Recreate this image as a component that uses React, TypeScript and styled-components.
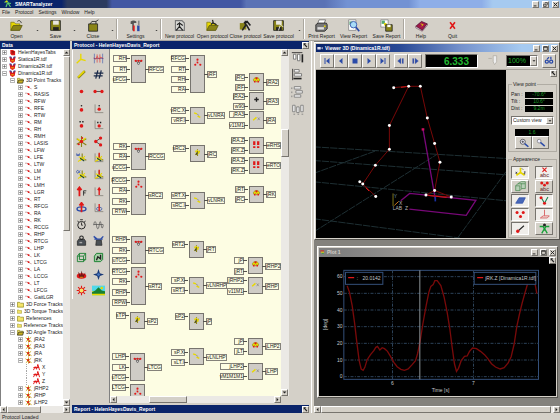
import React from "react";
import styled, { createGlobalStyle, css } from "styled-components";

const face = "#d4d0c8";
const navy = "#0a246a";
const raised = css`
  border: 1px solid;
  border-color: #fff #77746e #77746e #fff;
`;
const sunken = css`
  border: 1px solid;
  border-color: #77746e #fff #fff #77746e;
`;

const Global = createGlobalStyle`
  * { box-sizing: border-box; }
  body { margin: 0; background: ${face}; color: #222; font: 5px/7px "Liberation Sans", Arial, sans-serif; }
  button, select, input { font: inherit; color: inherit; padding: 0; margin: 0; }
  ul { list-style: none; margin: 0; padding: 0; }
  svg { display: block; }
`;

const Shell = styled.div`
  min-height: 100vh;
  display: grid;
  grid-template-rows: 8px 9px 24px 1fr 8px;
  overflow: hidden;
`;
const TitleBar = styled.header`
  display: flex;
  align-items: center;
  gap: 3px;
  padding: 0 1px 0 4px;
  color: #fff;
  font-weight: 700;
  background: linear-gradient(90deg, ${navy} 11%, #2c3b5e 12% 19%, #4257a3 20% 43%, #5a72b5 44% 58%, #7392d3 62% 73%, #8eaee8 75% 86%, #a6caf0 88%);
`;
const Spacer = styled.span`
  flex: 1;
`;
const MenuBar = styled.nav`
  display: flex;
  align-items: center;
  gap: 5px;
  padding-left: 2px;
`;
const MenuButton = styled.button`
  border: 0;
  background: none;
`;
const Toolbar = styled.div`
  display: flex;
  align-items: stretch;
  border-top: 1px solid #fff;
  border-bottom: 1px solid #aaa69e;
`;
const ToolButton = styled.button<{ $w: number }>`
  width: ${(p) => p.$w}px;
  border: 0;
  background: none;
  display: flex;
  flex-direction: column;
  align-items: center;
  justify-content: flex-end;
  gap: 1px;
  white-space: nowrap;
  line-height: 6px;
  padding-bottom: 1px;
`;
const DropButton = styled.button`
  width: 8px;
  border: 0;
  background: none;
  display: flex;
  align-items: center;
  justify-content: center;
  padding-top: 2px;
`;
const Separator = styled.span`
  width: 2px;
  margin: 1px 1px 1px 0;
  border-left: 1px solid #aaa69e;
  border-right: 1px solid #fff;
`;
const Main = styled.main`
  display: grid;
  grid-template-columns: 71px minmax(0, 241fr) minmax(0, 248fr);
  min-height: 0;
`;
const PanelTitle = styled.h2`
  margin: 0;
  height: 8px;
  padding-left: 2px;
  display: flex;
  align-items: center;
  justify-content: space-between;
  background: ${navy};
  color: #fff;
  font-size: 5px;
  line-height: 8px;
  white-space: nowrap;
`;
const DataPanel = styled.section`
  display: grid;
  grid-template-rows: 8px 1fr 7px;
  padding-right: 1px;
`;
const TreeArea = styled.div`
  display: grid;
  grid-template-columns: minmax(0, 1fr) 7px;
  background: #fff;
  border-left: 1px solid #808080;
`;
const Tree = styled.ul`
  overflow: hidden;
`;
const TreeRow = styled.li<{ $level: number }>`
  height: 7px;
  display: flex;
  align-items: center;
  gap: 2px;
  padding-left: ${(p) => 1 + p.$level * 8}px;
  white-space: nowrap;
`;
const Expander = styled.button`
  width: 5px;
  height: 5px;
  flex: none;
  border: 1px solid #b8b8b8;
  background: #fff;
  display: grid;
  place-items: center;
`;
const NoExpander = styled.span`
  width: 5px;
  height: 7px;
  flex: none;
  border-left: 1px dotted #a8a8a8;
`;

const Track = styled.div<{ $vertical?: boolean }>`
  display: flex;
  flex-direction: ${(p) => (p.$vertical ? "column" : "row")};
  background: #ebe9e5;
  min-width: 0;
`;
const Thumb = styled.div<{ $size: number }>`
  ${raised}
  background: ${face};
  flex: ${(p) => p.$size} 1 0;
`;
const Rest = styled.div<{ $part: number }>`
  flex: ${(p) => p.$part} 1 0;
`;
const SmallButton = styled.button`
  ${raised}
  width: 7px;
  height: 7px;
  flex: none;
  background: ${face};
  display: grid;
  place-items: center;
`;

const ProtocolColumn = styled.section`
  display: grid;
  grid-template-rows: 8px 1fr 8px;
  padding: 0 2px 0 1px;
  border-right: 1px solid #fff;
`;
const ProtocolBody = styled.div`
  display: grid;
  grid-template-columns: 37px minmax(0, 1fr) 20px;
  padding-bottom: 2px;
`;
const Palette = styled.div`
  display: grid;
  grid-template-columns: 17px 17px;
  grid-template-rows: repeat(15, 1fr);
  height: 249px;
  margin-top: 1px;
  border-left: 1px solid #fff;
`;
const PaletteButton = styled.button`
  border: 0;
  background: none;
  display: grid;
  place-items: center;
`;
const AlignTools = styled.div`
  display: flex;
  flex-direction: column;
  gap: 4px;
  align-items: center;
  padding: 2px 3px 0 0;
`;
const CanvasArea = styled.div`
  display: grid;
  grid-template-columns: minmax(0, 1fr) 8px;
  grid-template-rows: 1fr 7px;
  border-left: 1px solid #808080;
`;
const Canvas = styled.div`
  position: relative;
  overflow: hidden;
  background: #fdfde3;
`;
const Block = styled.div<{ $x: number; $y: number; $h: number }>`
  position: absolute;
  left: ${(p) => p.$x}px;
  top: ${(p) => p.$y}px;
  width: 15px;
  height: ${(p) => p.$h}px;
  border: 1px solid #77746e;
  background: #cfccc6;
  display: flex;
  justify-content: center;
  padding-top: 2px;
`;
const Tag = styled.span<{ $x: number; $y: number; $w?: number; $out?: boolean }>`
  position: absolute;
  left: ${(p) => p.$x}px;
  top: ${(p) => p.$y}px;
  ${(p) => p.$w && `width: ${p.$w}px;`}
  height: 7px;
  display: flex;
  justify-content: flex-end;
  border: 1px solid #85827a;
  line-height: 5px;
  white-space: nowrap;
  &::after {
    content: "";
    position: absolute;
    top: 2px;
    width: 4px;
    border-top: 1px solid #55534e;
    ${(p) => (p.$out ? "right: 100%;" : "left: 100%;")}
  }
`;

const Desk = styled.section`
  display: flex;
  flex-direction: column;
  background: #84827d;
  border-left: 2px solid ${face};
`;
const Win = styled.section`
  border: 1px solid #fff;
  border-right-color: #55534e;
  border-bottom-color: #55534e;
  background: ${face};
  padding: 1px;
`;
const ViewerWin = styled(Win)`
  margin-top: 1px;
`;
const PlotWin = styled(Win)`
  margin: 6px 2px 5px 3px;
`;
const WinTitle = styled.h2<{ $idle?: boolean }>`
  margin: 0;
  height: ${(p) => (p.$idle ? 9 : 8)}px;
  display: flex;
  align-items: center;
  gap: 2px;
  padding-left: 1px;
  color: ${(p) => (p.$idle ? face : "#fff")};
  font-size: 5px;
  background: ${(p) =>
    p.$idle
      ? "linear-gradient(90deg, #808080 10%, #a09c98 50%, #bdbab4)"
      : `linear-gradient(90deg, ${navy}, #2a4a96 35%, #7592cc 60%, #a6caf0 85%)`};
`;
const PlayBar = styled.div`
  display: flex;
  align-items: center;
  height: 18px;
  padding: 0 2px 0 4px;
  border-bottom: 1px solid #aaa69e;
`;
const PlayButton = styled.button`
  ${raised}
  width: 14px;
  height: 14px;
  background: ${face};
  display: grid;
  place-items: center;
`;
const Gap = styled.span`
  width: 4px;
`;
const Clock = styled.output`
  ${sunken}
  width: 53px;
  height: 14px;
  margin-left: 3px;
  padding-right: 8px;
  background: #000;
  color: #22b830;
  font: 700 10px/13px "Liberation Sans", Arial, sans-serif;
  text-align: right;
`;
const SelectBox = styled.span<{ $dark?: boolean }>`
  ${sunken}
  position: relative;
  display: block;
  width: ${(p) => (p.$dark ? 32 : 43)}px;
  height: ${(p) => (p.$dark ? 12 : 9)}px;
  background: ${(p) => (p.$dark ? "#000" : "#fff")};
  color: ${(p) => (p.$dark ? "#1fb02b" : "#222")};
  font-size: ${(p) => (p.$dark ? 7 : 5)}px;
`;
const ViewSelect = styled(SelectBox)`
  margin-top: 4px;
`;
const Select = styled.select`
  appearance: none;
  border: 0;
  background: transparent;
  width: 100%;
  height: 100%;
  padding-left: 1px;
  display: block;
`;
const SelectArrow = styled.span`
  ${raised}
  position: absolute;
  right: 0;
  top: 0;
  bottom: 0;
  width: 7px;
  background: ${face};
  display: grid;
  place-items: center;
  pointer-events: none;
`;
const ViewerBody = styled.div`
  display: grid;
  grid-template-columns: minmax(0, 1fr) 52px;
`;
const Scene = styled.svg`
  width: 100%;
  height: 168px;
  background: #000;
`;
const Side = styled.aside`
  padding: 0 1px 0 2px;
  display: flex;
  flex-direction: column;
  justify-content: space-between;
`;
const CornerButton = styled(SmallButton)`
  align-self: flex-end;
`;
const Group = styled.fieldset`
  margin: 0;
  padding: 3px 3px 2px 2px;
  min-width: 0;
  border: 1px solid #b0aca4;
`;
const Legend = styled.legend`
  padding: 0 1px;
  margin-left: 1px;
  line-height: 7px;
`;
const Field = styled.label`
  display: flex;
  justify-content: space-between;
  align-items: center;
  height: 7px;
`;
const Reading = styled.input`
  width: 28px;
  height: 6px;
  border: 0;
  background: #000;
  && { color: #1b9c27; }
  text-align: center;
`;
const ZoomBox = styled.div`
  display: grid;
  grid-template-columns: 17px 17px;
  justify-content: center;
  margin-top: 4px;
`;
const ZoomReading = styled(Reading)`
  grid-column: span 2;
  width: 34px;
  height: 7px;
`;
const ToggleGrid = styled.div`
  display: grid;
  grid-template-columns: 18px 18px;
  justify-content: space-between;
  gap: 1px;
`;
const ToggleButton = styled.button<{ $on?: boolean }>`
  ${(p) => (p.$on ? sunken : raised)}
  height: 13px;
  background: ${(p) => (p.$on ? "#f0eeea" : face)};
  display: grid;
  place-items: center;
`;
const PlotArea = styled.div`
  position: relative;
  background: #000;
`;
const PlotSvg = styled.svg`
  width: 100%;
  height: 139px;
`;
const PlotCorner = styled(SmallButton)`
  position: absolute;
  right: 0;
  top: 0;
`;
const Status = styled.footer`
  padding-left: 2px;
  line-height: 8px;
`;

/* ---------- icons ---------- */
const Y = "#e8d800";
const O = "#8a8418";
const R = "#e01818";
const B = "#2a4aa8";
const K = "#222";

const frame = <path d="M3 2v12h12" stroke="#77746e" fill="none" />;
const axes = (
  <g fill="none" strokeWidth="1.6">
    <path d="M9 2v7l6 3" stroke={O} />
    <path d="M9 9L3 14M4 7l9 4M6 13l7-7" stroke={Y} />
    <path d="M6 9l6 4" stroke="#244a30" />
  </g>
);
const folder = (
  <>
    <path d="M1 14V4h4l2 2h5v3" fill={Y} stroke={O} />
    <path d="M1 14l3-6h11l-3 6z" fill={O} stroke="#5c5810" />
  </>
);
const disk = (
  <>
    <path d="M2 2h12v12H2z" fill={O} stroke={K} />
    <path d="M5 2h7v5H5z" fill="#e8e6e0" />
    <path d="M5 10h7v4H5z" fill={K} />
  </>
);
const walker = (
  <g fill="none" stroke={K} strokeWidth="1.4">
    <path d="M3 2h8l3 3v9H3z" fill="#d8d8d4" stroke="#777" />
    <path d="M8 4v5l-4 5M8 9l4 5M5 7l3-2 4 3" />
  </g>
);

const art: Record<string, React.ReactNode> = {
  open: <>{folder}<path d="M9 3c2-2 4-1 5 2" fill="none" stroke={K} /></>,
  save: disk,
  close: <><path d="M2 6h11v9H2z" fill={O} stroke={K} /><path d="M4 6l2-3h5v3M11 3l3-2" fill="none" stroke={K} /></>,
  settings: <><path d="M2 3c3-2 5-1 7 0v2H6v9H4V6H2z" fill="#555" /><path d="M10 8h3v7h-3z" fill={B} /><path d="M5 8h2v7H5z" fill={R} /><path d="M11 2h2v6h-2z" fill="#888" /></>,
  newp: walker,
  openp: <>{folder}<path d="M8 1l1 4 4 2M9 4L6 7" stroke={K} strokeWidth="1.5" fill="none" /></>,
  closep: <><path d="M1 5h8v8H1z" fill={O} /><path d="M8 2v6l-4 6M9 7l4 7M6 5l4-2 4 5" stroke={K} fill="none" strokeWidth="2" /></>,
  savep: <>{disk}<path d="M10 6l4 4M10 8l-2 6" stroke="#fff" /></>,
  print: <><path d="M5 1h8l-2 5H3z" fill="#fff" stroke="#666" /><path d="M1 7l3-2h10l1 2v5l-3 3H1z" fill="#777" stroke={K} /><path d="M3 10h8v3H3z" fill="#ddd" /><path d="M11 8h2v2h-2z" fill={Y} /></>,
  view: <><path d="M2 1h9v13H2z" fill="#fff" stroke="#888" /><path d="M3 3h4v4H3z" fill="#58a870" /><circle cx="8" cy="7" r="4" fill="#a8dcf8" stroke={B} /><path d="M11 10l4 5" stroke={B} strokeWidth="2" /></>,
  saver: <><path d="M1 1h9v9H1z" fill="#fff" stroke="#888" /><path d="M2 2h4v4H2z" fill="#58a870" /><path d="M5 5h3v3H5z" fill={Y} /><path d="M7 7h8v8H7z" fill={O} stroke={K} /><path d="M9 7h4v3H9z" fill="#fff" /></>,
  help: <><path d="M1 9l7-6 7 3-6 8z" fill="#a01848" stroke="#501030" /><path d="M1 9l8 5 6-8v2l-6 7-8-4z" fill="#eee" stroke="#501030" strokeWidth=".6" /><path d="M7 6l3 1-2 2" stroke={Y} fill="none" /></>,
  quit: <path d="M5 4l6 8M11 4l-6 8" stroke={R} strokeWidth="2" />,
  axis: <path d="M7 1v8l7 2M7 9l-6 6" stroke={Y} strokeWidth="2" fill="none" />,
  plot: <><path d="M2 1v14M14 1v14M1 8h14" stroke={B} strokeWidth=".8" /><path d="M1 7l3 2 2-4 3 4 2-3 4 2M6 2v12M10 2v12" stroke={R} fill="none" strokeWidth=".8" /></>,
  line: <><path d="M3 13L13 3" stroke={O} strokeWidth="3.4" /><path d="M3 12L12 3" stroke={Y} strokeWidth="2.4" /></>,
  hash: <path d="M7 2L4 14M12 2L9 14M2 6h13M1 10h13" stroke="#182848" strokeWidth="1.8" />,
  dot: <circle cx="8" cy="8" r="2.6" fill={R} />,
  dots: <><path d="M2 8h12" stroke={K} /><circle cx="3" cy="8" r="2.4" fill={R} /><circle cx="13" cy="8" r="2.4" fill={R} /></>,
  point: <><circle cx="8" cy="10" r="2.6" fill={R} /><circle cx="8" cy="4" r="1.2" fill={K} /></>,
  pointF: <>{frame}<circle cx="9" cy="9" r="2.4" fill={R} /><circle cx="9" cy="4" r="1.2" fill={K} /></>,
  pair: <><circle cx="8" cy="10" r="2.6" fill={R} /><path d="M5 3h2v2H5zM9 3h2v2H9z" fill={K} /></>,
  pairF: <>{frame}<circle cx="9" cy="10" r="2.4" fill={R} /><path d="M6 4h2v2H6zM10 4h2v2h-2z" fill={K} /></>,
  burst: <><path d="M8 0v16M1 4l14 9M1 12l14-8" stroke={O} strokeWidth="1.6" /><path d="M2 4l5 4M9 7l5-4" stroke={Y} strokeWidth="2" /><circle cx="8" cy="8" r="2.5" fill={R} /><circle cx="4" cy="12" r="1.6" fill={R} /><circle cx="9" cy="3" r="1.5" fill={R} /></>,
  angle: <><path d="M11 3L4 8l7 5" stroke={K} fill="none" /><circle cx="11" cy="3" r="2.4" fill={R} /><circle cx="4" cy="8" r="2.4" fill={R} /><circle cx="11" cy="13" r="2.4" fill={R} /></>,
  omega: <>{axes}<path d="M1 2v3h2V3v2h2V2" stroke={B} fill="none" /></>,
  axesF: <>{frame}{axes}<path d="M9 1v7" stroke={R} strokeWidth="2" /></>,
  alpha: <>{axes}<path d="M6 2L3 6C0 6 0 2 3 2l3 4" stroke={B} fill="none" /></>,
  force: <><path d="M5 15V4M2 6l3-4 3 4" stroke={R} strokeWidth="2.6" fill="none" /><path d="M11 14V7h4M11 10h3" stroke={K} fill="none" strokeWidth="1.2" /></>,
  forceF: <>{frame}<path d="M9 13V4M7 6l2-3 2 3" stroke={R} strokeWidth="2" fill="none" /></>,
  torque: <><ellipse cx="8" cy="10" rx="6.5" ry="3" fill="none" stroke={B} strokeWidth="2" /><path d="M8 15V3M5 5l3-4 3 4" stroke={R} strokeWidth="2.4" fill="none" /></>,
  torqueF: <>{frame}<ellipse cx="9" cy="10" rx="4" ry="2.4" fill="none" stroke={B} /><path d="M9 13V3" stroke={R} strokeWidth="2" /></>,
  watch: <><circle cx="8" cy="9" r="5.5" fill="none" stroke={K} strokeWidth="1.4" /><path d="M8 9V5M8 9h2M6 1h4M2 3l2 1M14 3l-2 1" stroke={K} strokeWidth="1.2" /></>,
  wave: <path d="M1 9c1-7 3-7 4 0s3 7 4 0 2-7 3 0 2 4 3 0M1 8h14" fill="none" stroke="#555" strokeWidth="1.1" />,
  weight: <><path d="M4 6h8l2 3v6H2V9z" fill="#4a5055" stroke={K} /><circle cx="8" cy="4" r="2.6" fill="none" stroke={K} strokeWidth="1.5" /><path d="M5 10h4v2H5z" fill="#aaa" /></>,
  weight2: <><path d="M5 7h7l1 8H4z" fill="#4a5055" stroke={K} /><path d="M1 2l5 4h5l4-4M2 6h12" stroke={B} strokeWidth="2" fill="none" /></>,
  cube: <path d="M2 6h9v8H2zM5 2h9v9M2 6l3-4M11 6l3-4M11 14l3-3M5 2v9h9" fill="none" stroke="#188030" strokeWidth="1.3" />,
  cube2: <><path d="M2 6l3-4h9v9l-3 3H2z" fill="#a8d0a8" stroke="#188030" strokeWidth="1.4" /><path d="M5 12l2-5 4 3V4" stroke={K} strokeWidth="2" fill="none" /></>,
  organ: <><ellipse cx="8" cy="10" rx="7" ry="4" fill={R} /><path d="M3 4l4 5 1-7 2 7 4-4-3 7H5z" fill="#701818" /><path d="M6 12h4" stroke={Y} /></>,
  star: <><path d="M8 0l2 6 6 2-6 2-2 6-2-6-6-2 6-2z" fill="#183878" /><circle cx="8" cy="8" r="2" fill="#4878c0" /></>,
  sun: <><path d="M8 1v14M1 8h14M3 3l10 10M13 3L3 13" stroke={R} strokeWidth="1.6" /><circle cx="8" cy="8" r="3.6" fill="#f4e468" stroke={R} strokeWidth="1.4" /></>,
  land: <><path d="M0 2h16v12H0z" fill="#50d8e8" /><path d="M0 9h16v5H0z" fill={Y} /><path d="M0 10l4-2 4-4 4 4 4 1v3H0z" fill="#188030" /><circle cx="12" cy="5" r="1.6" fill={Y} /></>,
  alignTop: <><path d="M1 2h13" stroke={K} /><path d="M3 4h3v6H3zM8 4h3v8H8z" fill="#fff" stroke="#666" /><path d="M14 14V4" stroke={K} strokeWidth="2" /></>,
  alignLeft: <><path d="M2 1v14" stroke={K} /><path d="M4 2h6v3H4zM4 7h9v3H4z" fill="#fff" stroke="#666" /><path d="M3 13h10" stroke={K} strokeWidth="2" /></>,
  alignMid: <path d="M4 2h8v3H4zM6 7h8v3H6zM4 12h8v3H4zM1 3v2M1 8v2M1 13v2" fill="#eee" stroke="#777" />,
  alignCen: <path d="M2 4h3v8H2zM7 6h3v7H7zM12 4h3v8h-3zM3 15h2M8 15h2M13 15h2" fill="#eee" stroke="#777" />,
  book: <><path d="M3 2h6l5 3v9H6l-3-3z" fill={R} /><path d="M6 6h6M6 9h6" stroke="#601010" strokeWidth="1.5" /></>,
  tdf: <><path d="M1 2h14l-2 11-5 3-5-3z" fill={R} /><path d="M5 2l3 5 3-5z" fill="#fff" /><path d="M1 2h4v4M15 2h-4v4" stroke={B} strokeWidth="2" fill="none" /><path d="M5 11h6" stroke={Y} strokeWidth="2" /></>,
  folder: <path d="M1 14V3h5l2 2h7v9z" fill="#f4e468" stroke="#8a8418" strokeWidth="1.5" />,
  folderOpen: <><path d="M1 14V3h5l2 2h6v3" fill="#f4e468" stroke={O} strokeWidth="1.5" /><path d="M1 14l3-7h11l-2 7z" fill="#c8b020" stroke={K} strokeWidth="1.5" /></>,
  track: <><path d="M0 5h5l7 5 3 1" stroke="#b07070" fill="none" strokeWidth="1.4" /><path d="M5 5h5v4H7z" fill={R} /></>,
  joint: <><path d="M1 4l14 9M2 13L14 3M8 1v14" stroke="#c8aa28" strokeWidth="2.2" /><circle cx="7" cy="7" r="2.6" fill={R} /><circle cx="10" cy="12" r="1.8" fill={R} /></>,
  wrench: <><path d="M8 2v12M4 12l8-7" stroke={O} strokeWidth="2" /><path d="M4 6l8 1M7 4l4 6" stroke={Y} strokeWidth="3" /><path d="M8 6l-2 6" stroke={K} strokeWidth="1.4" /></>,
  pinned: <><path d="M2 7l3-4h6l3 4-2 3-2-2-2 3-2-3-2 2z" fill={Y} stroke={O} /><circle cx="8" cy="4" r="2" fill={R} /><circle cx="5" cy="10" r="1.6" fill={R} /><circle cx="11" cy="10" r="1.6" fill={R} /></>,
  signal: <path d="M1 14l4-8 3 6 3-11 4 13M1 8h13" stroke={R} fill="none" strokeWidth="2.2" />,
  tri: <><path d="M3 5h10L8 10z" fill="none" stroke={K} /><circle cx="3" cy="5" r="2" fill={R} /><circle cx="8" cy="5" r="2" fill={R} /><circle cx="13" cy="5" r="2" fill={R} /><circle cx="8" cy="10" r="1.6" fill="#fff" stroke={K} /></>,
  cloud: <><path d="M8 3l-4 9M8 8l5 4" stroke="#e0a0a0" /><circle cx="8" cy="3" r="1.9" fill={R} /><circle cx="4" cy="12" r="1.9" fill={R} /><circle cx="13" cy="12" r="1.9" fill={R} /><circle cx="8" cy="8" r="1.6" fill={R} /></>,
  vec: <><path d="M2 5l5 2M8 11l5 2" stroke={Y} strokeWidth="2.6" /><path d="M7 7l4 3" stroke="#77746e" /></>,
  plus: <path d="M8 4v8M4 8h8" stroke={K} strokeWidth="2.4" />,
  mul: <><path d="M2 11l6-5" stroke={Y} strokeWidth="2.6" /><path d="M10 6l4 5M14 6l-4 5" stroke="#777" /></>,
  steps: <path d="M4 2v7M11 2v7M4 11v3M11 11v3" stroke={R} strokeWidth="4" />,
  zoomIn: <><circle cx="6" cy="6" r="4" fill="#eef" stroke={K} /><path d="M4 6h4M6 4v4" stroke={K} /><path d="M9 9l6 5" stroke={B} strokeWidth="2.5" /></>,
  zoomOut: <><circle cx="5" cy="5" r="3" fill="#eef" stroke="#666" /><path d="M7 7l7 6" stroke={B} strokeWidth="2.4" /></>,
  xyz: <><path d="M8 1v7l6 4M8 8l-6 4" stroke={Y} strokeWidth="2.4" fill="none" /><path d="M1 7l2 3M3 7l-2 3M10 2l2 2M13 7h2l-2 3h2" stroke={K} fill="none" /></>,
  cubes: <path d="M1 7h6v7H1zM9 4h6v7H9zM1 7l3-3h6M4 4L9 1h6v3M7 14l3-3" fill="#b8d0b8" stroke="#58905c" strokeWidth="1.2" />,
  floor: <path d="M1 12l5-8h9l-4 8z" fill="#4868b8" stroke={B} />,
  dots3: <><circle cx="3" cy="5" r="2.2" fill={R} /><circle cx="12" cy="5" r="2.2" fill={R} /><circle cx="8" cy="11" r="2.2" fill={R} /></>,
  bone: <><path d="M4 12l9-8" stroke={K} strokeWidth="1.6" /><circle cx="4" cy="12" r="2.4" fill={R} /></>,
  noName: <path d="M5 1l6 6M11 1L5 7" stroke={R} strokeWidth="1.6" />,
  names: <><circle cx="4" cy="3" r="2.2" fill={R} /><circle cx="12" cy="3" r="2.2" fill={R} /><circle cx="8" cy="6" r="2" fill={R} /></>,
  vee: <><path d="M4 5l4 7 5-9" stroke="#188050" strokeWidth="1.6" fill="none" /><circle cx="3" cy="4" r="2.2" fill={R} /><circle cx="8" cy="12" r="2.2" fill={R} /></>,
  plate: <path d="M8 1v9M2 13l4-3h9l-3 3z" stroke="#d86868" fill="none" strokeWidth="1.4" />,
  man: <><path d="M1 5h5l2 4 2-4h5M8 8l-4 7M8 8l4 7" stroke="#18a038" strokeWidth="2" fill="none" /><circle cx="8" cy="3" r="2.2" fill={K} /></>,
  first: <path d="M3 2h2v12H3zM13 2v12L6 8z" fill={B} />,
  back: <path d="M11 2v12L4 8z" fill={B} />,
  stop: <path d="M3 3h10v10H3z" fill={B} />,
  play: <path d="M5 2v12l7-6z" fill={B} />,
  last: <path d="M11 2h2v12h-2zM3 2v12l7-6z" fill={B} />,
  prev: <path d="M8 2v12L1 8zM10 3h3v10h-3z" fill={B} stroke="#88a" strokeWidth=".6" />,
  next: <path d="M8 2v12l7-6zM3 3h3v10H3z" fill={B} stroke="#88a" strokeWidth=".6" />,
  slider: <path d="M2 5h5M9 1h5v9l-3 4-2-4z" fill="#eee" stroke="#aaa69e" />,
  loop: <path d="M2 9c0-3 5-3 5 0s-5 3-5 0zM9 9c0-3 5-3 5 0s-5 3-5 0zM5 5l3-3M11 5V1" stroke={B} fill="none" strokeWidth="2" />,
  up: <path d="M2 11h12L8 5z" fill={K} />,
  down: <path d="M2 5h12l-6 6z" fill={K} />,
  left: <path d="M11 2v12L5 8z" fill={K} />,
  right: <path d="M5 2v12l6-6z" fill={K} />,
  min: <path d="M2 11h9v3H2z" fill={K} />,
  max: <path d="M2 2h12v12H2zM2 4h12" stroke={K} strokeWidth="2.4" fill="none" />,
  restore: <path d="M6 2h8v7M2 7h8v7H2z" stroke={K} strokeWidth="2.2" fill="none" />,
  x: <path d="M2 2l12 12M14 2L2 14" stroke={K} strokeWidth="3" />,
  corner: <path d="M2 1h8L7 4l7 8-3 2-7-8-2 3z" fill={K} />,
  expand: <path d="M1 8h14M8 1v14" stroke="#666" strokeWidth="4" />,
  collapse: <path d="M1 8h14" stroke="#666" strokeWidth="4" />,
  logo: <><path d="M1 5l5-3 3 4 5 1M7 6l-3 8M8 6l5 8" stroke="#58c870" strokeWidth="2.4" fill="none" /><circle cx="5" cy="3" r="2" fill={Y} /></>,
  camera: <path d="M1 5h9v7H1zM11 8l4-3v7z" fill="#dde" />,
  chart: <><path d="M1 3h12" stroke={R} strokeWidth="3" /><path d="M3 7h10" stroke={Y} strokeWidth="3" /><path d="M6 11h6" stroke="#38a048" strokeWidth="3" /></>,
};

const Icon = ({ name, size = 14 }: { name: string; size?: number }) => (
  <svg width={size} height={size} viewBox="0 0 16 16" aria-hidden="true">
    {art[name]}
    {(name === "noName" || name === "names") && (
      <text x="8" y="15" textAnchor="middle" fontSize="8" fill="#601818">abc</text>
    )}
  </svg>
);

/* ---------- shared parts ---------- */
const Scrollbar = ({ vertical, parts }: { vertical?: boolean; parts: [number, number, number] }) => (
  <Track $vertical={vertical}>
    <SmallButton aria-label={vertical ? "Scroll up" : "Scroll left"}>
      <Icon name={vertical ? "up" : "left"} size={5} />
    </SmallButton>
    <Rest $part={parts[0]} />
    <Thumb $size={parts[1]} />
    <Rest $part={parts[2]} />
    <SmallButton aria-label={vertical ? "Scroll down" : "Scroll right"}>
      <Icon name={vertical ? "down" : "right"} size={5} />
    </SmallButton>
  </Track>
);

const WindowButtons = ({ middle = "max" }: { middle?: string }) => (
  <>
    <SmallButton aria-label="Minimize"><Icon name="min" size={5} /></SmallButton>
    <SmallButton aria-label="Maximize"><Icon name={middle} size={5} /></SmallButton>
    <SmallButton aria-label="Close"><Icon name="x" size={5} /></SmallButton>
  </>
);

/* ---------- data ---------- */
type Tool = { label: string; icon: string; w: number } | "drop" | "sep";
const tools: Tool[] = [
  { label: "Open", icon: "open", w: 33 }, "drop",
  { label: "Save", icon: "save", w: 29 }, "drop",
  { label: "Close", icon: "close", w: 30 }, "drop", "sep",
  { label: "Settings", icon: "settings", w: 33 }, "drop", "sep",
  { label: "New protocol", icon: "newp", w: 33 },
  { label: "Open protocol", icon: "openp", w: 33 },
  { label: "Close protocol", icon: "closep", w: 33 },
  { label: "Save protocol", icon: "savep", w: 33 }, "drop", "sep",
  { label: "Print Report", icon: "print", w: 31 },
  { label: "View Report", icon: "view", w: 33 },
  { label: "Save Report", icon: "saver", w: 33 }, "sep",
  { label: "Help", icon: "help", w: 30 },
  { label: "Quit", icon: "quit", w: 33 },
];

type Node = [level: number, icon: string, label: string, mark?: "+" | "-"];
const points =
  "S RASIS RFW RFE RTW RM RH RMH LASIS LFW LFE LTW LM LH LMH LGR RT RFCG RA RK RCCG RHP RTCG LHP LK LTCG LA LCCG LT LFCG GaitLGR".split(" ");
const nodes: Node[] = [
  [0, "book", "HelenHayesTabs", "+"],
  [0, "tdf", "Statica1R.tdf", "+"],
  [0, "tdf", "Dinamica2R.tdf", "+"],
  [0, "tdf", "Dinamica1R.tdf", "-"],
  [1, "folderOpen", "3D Point Tracks", "-"],
  ...points.map((p): Node => [2, "track", p, "+"]),
  [1, "folder", "3D Force Tracks", "+"],
  [1, "folder", "3D Torque Tracks", "+"],
  [1, "folder", "References", "+"],
  [1, "folder", "Reference Tracks", "+"],
  [1, "folderOpen", "3D Angle Tracks", "-"],
  [2, "joint", "jRA2", "+"],
  [2, "joint", "jRA3", "+"],
  [2, "joint", "jRA", "+"],
  [2, "joint", "jRK", "-"],
  [3, "signal", "X"],
  [3, "signal", "Y"],
  [3, "signal", "Z"],
  [2, "joint", "jRHP2", "+"],
  [2, "joint", "jRHP", "+"],
  [2, "joint", "jLHP2", "+"],
];

const palette =
  "axis plot line hash dot dots point pointF pair pairF burst angle omega axesF alpha axesF force forceF torque torqueF watch wave weight weight2 cube cube2 organ star sun land".split(" ");

type Flow = {
  x: number; y: number; h: number; icon: string; w: number;
  ins: [label: string, y: number][];
  out?: [label: string, y: number];
};
const flows: Flow[] = [
  { x: 21, y: 6, h: 28, icon: "tri", w: 14, ins: [["RH", 6], ["RT", 17], ["uFCG", 27]], out: ["RFCG", 17] },
  { x: 80, y: 6, h: 38, icon: "cloud", w: 15, ins: [["RFCG", 6], ["RT", 17], ["RH", 27], ["RA", 37]], out: ["jRF", 22] },
  { x: 80, y: 58, h: 17, icon: "vec", w: 15, ins: [["vRC.X", 58], ["vRF.I", 68]], out: ["vLNRA", 63] },
  { x: 21, y: 94, h: 27, icon: "tri", w: 14, ins: [["RK", 94], ["RA", 104], ["uCCG", 115]], out: ["RCCG", 104] },
  { x: 80, y: 96, h: 17, icon: "wrench", w: 13, ins: [["sRC2", 96]], out: ["jRC", 102] },
  { x: 21, y: 128, h: 38, icon: "cloud", w: 15, ins: [["RCCG", 128], ["RA", 138], ["RK", 149], ["RTW", 159]], out: ["sRC2", 143] },
  { x: 80, y: 143, h: 17, icon: "vec", w: 15, ins: [["sRT.X", 143], ["sRC.I", 153]], out: ["vLNRK", 148] },
  { x: 139, y: 24, h: 18, icon: "pinned", w: 10, ins: [["jRC", 25], ["jRF", 35]], out: ["jRA2", 30] },
  { x: 139, y: 43, h: 18, icon: "plus", w: 12, ins: [["jRA2", 44], ["w90", 54]], out: ["jRA3", 49] },
  { x: 139, y: 62, h: 18, icon: "mul", w: 16, ins: [["jRA3", 62], ["v11M1", 73]], out: ["jRA", 68] },
  { x: 139, y: 88, h: 17, icon: "steps", w: 14, ins: [["jRA.Z", 88], ["jRK.Z", 98]], out: ["eRHS", 93] },
  { x: 139, y: 108, h: 17, icon: "steps", w: 14, ins: [["jRA.Z", 108], ["jRK.Z", 118]], out: ["eRTO", 113] },
  { x: 139, y: 137, h: 17, icon: "pinned", w: 10, ins: [["jRT", 137], ["jRC", 147]], out: ["jRK", 142] },
  { x: 21, y: 187, h: 28, icon: "tri", w: 15, ins: [["RHP", 187], ["RK", 198], ["uTCG", 208]], out: ["RTCG", 198] },
  { x: 21, y: 218, h: 38, icon: "cloud", w: 15, ins: [["RTCG", 219], ["RK", 229], ["RHP", 240], ["RPW", 250]], out: ["sRT2", 234] },
  { x: 20, y: 263, h: 17, icon: "wrench", w: 10, ins: [["sTP", 263]], out: ["sP2", 269] },
  { x: 20, y: 304, h: 28, icon: "tri", w: 14, ins: [["LHP", 304], ["LK", 315], ["uTCG", 325]], out: ["LTCG", 315] },
  { x: 20, y: 335, h: 38, icon: "cloud", w: 14, ins: [["LTCG", 335]] },
  { x: 79, y: 192, h: 17, icon: "wrench", w: 13, ins: [["sRT2", 192]], out: ["jRT", 197] },
  { x: 79, y: 228, h: 17, icon: "vec", w: 14, ins: [["sP.X", 228], ["sRT.I", 238]], out: ["vLNRHP", 233] },
  { x: 79, y: 264, h: 17, icon: "wrench", w: 10, ins: [["sP2", 264]], out: ["jP", 269] },
  { x: 79, y: 299, h: 17, icon: "vec", w: 14, ins: [["sP.X", 300], ["sLT.I", 310]], out: ["vLNLHP", 305] },
  { x: 138, y: 208, h: 17, icon: "pinned", w: 10, ins: [["jP", 208], ["jRT", 219]], out: ["jRHP2", 214] },
  { x: 138, y: 228, h: 17, icon: "mul", w: 17, ins: [["jRHP2", 228], ["v11M1", 239]], out: ["jRHP", 234] },
  { x: 138, y: 289, h: 17, icon: "pinned", w: 10, ins: [["jP", 289], ["jLT", 299]], out: ["jLHP2", 294] },
  { x: 138, y: 314, h: 17, icon: "mul", w: 24, ins: [["jLHP2", 314], ["vM1M1M1", 324]], out: ["jLHP", 319] },
];

const markers = [
  [241, 38], [286, 34], [321, 34], [342, 129], [364, 206], [380, 262], [364, 347], [338, 361], [414, 367],
  [228, 152], [228, 223], [186, 271], [139, 321], [148, 328], [187, 365],
];
const degrees = [60, 50, 40, 30, 20, 10, 0];
const curve =
  "105,140 112,160 120,200 127,250 134,310 141,365 147,390 153,394 158,385 165,362 175,347 185,335 191,325 196,322 203,333 210,326 217,329 226,337 235,352 245,370 255,383 266,391 277,394 288,390 300,377 310,365 316,345 323,312 332,255 342,200 350,160 356,142 363,137 368,125 375,125 386,140 396,175 405,220 413,270 420,325 427,375 433,397 439,388 447,365 457,352 465,351 472,337 481,327 493,329 505,337 517,347 527,359 538,374 550,384 564,390 576,386 588,372 597,353 606,315 614,262 622,225 630,192 638,163 646,135 655,120 664,122 669,136 674,164";

export default function App() {
  return (
    <Shell>
      <Global />
      <TitleBar>
        <Icon name="logo" size={8} />SMARTanalyzer<Spacer />
        <WindowButtons middle="restore" />
      </TitleBar>
      <MenuBar>
        {["File", "Protocol", "Settings", "Window", "Help"].map((m) => <MenuButton key={m}>{m}</MenuButton>)}
      </MenuBar>
      <Toolbar>
        {tools.map((t, i) =>
          t === "sep" ? <Separator key={i} /> :
          t === "drop" ? <DropButton key={i} aria-label="More"><Icon name="down" size={3} /></DropButton> : (
            <ToolButton key={i} $w={t.w}><Icon name={t.icon} size={13} />{t.label}</ToolButton>
          ),
        )}
      </Toolbar>
      <Main>
        <DataPanel>
          <PanelTitle>Data</PanelTitle>
          <TreeArea>
            <Tree>
              {nodes.map(([level, icon, label, mark], i) => (
                <TreeRow key={i} $level={level}>
                  {mark ? (
                    <Expander aria-label={`Toggle ${label}`}>
                      <Icon name={mark === "+" ? "expand" : "collapse"} size={3} />
                    </Expander>
                  ) : <NoExpander />}
                  <Icon name={icon} size={7} />
                  {label}
                </TreeRow>
              ))}
            </Tree>
            <Scrollbar vertical parts={[0, 174, 168]} />
          </TreeArea>
          <Scrollbar parts={[0, 33, 22]} />
        </DataPanel>

        <ProtocolColumn>
          <PanelTitle>Protocol - HelenHayesDavis_Report<SmallButton aria-label="Detach"><Icon name="corner" size={5} /></SmallButton></PanelTitle>
          <ProtocolBody>
            <Palette>
              {palette.map((p, i) => (
                <PaletteButton key={i} aria-label={p}><Icon name={p} size={p === "land" ? 13 : 11} /></PaletteButton>
              ))}
            </Palette>
            <CanvasArea>
              <Canvas>
                {flows.map((f, i) => (
                  <React.Fragment key={i}>
                    <Block $x={f.x} $y={f.y} $h={f.h}><Icon name={f.icon} size={9} /></Block>
                    {f.ins.map(([label, y], j) => (
                      <Tag key={j} $x={f.x - 4 - f.w} $y={y} $w={f.w}>{label}</Tag>
                    ))}
                    {f.out && <Tag $out $x={f.x + 17} $y={f.out[1]}>{f.out[0]}</Tag>}
                  </React.Fragment>
                ))}
              </Canvas>
              <Scrollbar vertical parts={[73, 26, 233]} />
              <Scrollbar parts={[33, 38, 90]} />
            </CanvasArea>
            <AlignTools>
              {["alignTop", "alignLeft", "alignMid", "alignCen"].map((a) => (
                <PaletteButton key={a} aria-label={a}><Icon name={a} size={13} /></PaletteButton>
              ))}
            </AlignTools>
          </ProtocolBody>
          <PanelTitle>Report - HelenHayesDavis_Report<SmallButton aria-label="Detach"><Icon name="corner" size={5} /></SmallButton></PanelTitle>
        </ProtocolColumn>

        <Desk>
          <ViewerWin>
            <WinTitle><Icon name="camera" size={6} />Viewer 3D (Dinamica1R.tdf)<Spacer /><WindowButtons /></WinTitle>
            <PlayBar>
              {["first", "back", "stop", "play", "last"].map((b) => (
                <PlayButton key={b} aria-label={b}><Icon name={b} size={8} /></PlayButton>
              ))}
              <Gap />
              {["prev", "next"].map((b) => (
                <PlayButton key={b} aria-label={b}><Icon name={b} size={8} /></PlayButton>
              ))}
              <Clock>6.333</Clock>
              <Spacer />
              <Icon name="slider" size={11} />
              <Spacer />
              <SelectBox $dark>
                <Select aria-label="Speed"><option>100%</option></Select>
                <SelectArrow><Icon name="down" size={4} /></SelectArrow>
              </SelectBox>
              <Gap />
              <PlayButton aria-label="Loop"><Icon name="loop" size={10} /></PlayButton>
            </PlayBar>
            <ViewerBody>
              <Scene viewBox="7 -15 572 505" preserveAspectRatio="xMidYMid slice" role="img" aria-label="3D scene">
                <g stroke="#1e2f33" strokeWidth="3" fill="none" strokeDasharray="22 3">
                  <path d="M0 216L579 251M0 257L579 300M0 321L579 378M0 432L440 490" />
                  <path d="M0 296L190 227M0 472L372 238M433 490L579 290" />
                </g>
                <path d="M262 378L289 356L488 377L459 422L288 403" stroke="#780878" strokeWidth="4" fill="none" />
                <path d="M329 163L366 372" stroke="#780878" strokeWidth="4" />
                <g stroke="#780808" strokeWidth="3" fill="none">
                  <path d="M241 38L286 34H321L342 129L364 206L380 262L364 347L414 367L338 361L364 347" />
                  <path d="M286 34L228 152V223L186 271L148 328L187 365M148 328L139 321" />
                </g>
                <path d="M263 37L280 35M345 362L400 368M157 339L167 349" stroke="#d01818" strokeWidth="3" />
                <path d="M366 366v14" stroke="#1830a0" strokeWidth="5" />
                <path d="M239 356v38" stroke="#7c7418" strokeWidth="3" />
                <path d="M243 392l13-12" stroke="#c87820" strokeWidth="3" />
                <path d="M325 160h8v7h-8z" fill="#d01060" />
                <g fill="#fff">
                  {markers.map(([x, y]) => <circle key={`${x}-${y}`} cx={x} cy={y} r="4.5" />)}
                </g>
                <g fill="#b8b8b8" fontSize="15">
                  <text x="241" y="369" fill="#6888a0">Y</text>
                  <text x="257" y="391">X</text>
                  <text x="238" y="405">LAB</text>
                  <text x="275" y="407">Z</text>
                </g>
              </Scene>
              <Side>
                <CornerButton aria-label="Detach"><Icon name="corner" size={5} /></CornerButton>
                <Group>
                  <Legend>View point</Legend>
                  <Field>Pan :<Reading readOnly value="-70.6°" /></Field>
                  <Field>Tilt :<Reading readOnly value="10.6°" /></Field>
                  <Field>Dist :<Reading readOnly value="9.2m" /></Field>
                  <ViewSelect>
                    <Select aria-label="View"><option>Custom view</option></Select>
                    <SelectArrow><Icon name="down" size={4} /></SelectArrow>
                  </ViewSelect>
                  <ZoomBox>
                    <ZoomReading readOnly value="1.6" aria-label="Zoom" />
                    <ToggleButton aria-label="Zoom in"><Icon name="zoomIn" size={10} /></ToggleButton>
                    <ToggleButton aria-label="Zoom out"><Icon name="zoomOut" size={10} /></ToggleButton>
                  </ZoomBox>
                </Group>
                <Group>
                  <Legend>Appearence</Legend>
                  <ToggleGrid>
                    {["xyz", "noName", "cubes", "names", "floor", "vee", "dots3", "plate", "bone", "man"].map((a) => (
                      <ToggleButton key={a} $on={!["cubes", "names", "man"].includes(a)} aria-label={a}>
                        <Icon name={a} size={11} />
                      </ToggleButton>
                    ))}
                  </ToggleGrid>
                </Group>
              </Side>
            </ViewerBody>
          </ViewerWin>

          <PlotWin>
            <WinTitle $idle><Icon name="chart" size={5} />Plot 1<Spacer /><WindowButtons /></WinTitle>
            <PlotArea>
              <PlotSvg viewBox="24 54 704 417" role="img" aria-label="Plot of jRK.Z">
                <rect x="95" y="94" width="584" height="327" fill="none" stroke="#34507a" strokeWidth="3" />
                <g stroke="#2c4258" strokeWidth="3" strokeDasharray="9 4 3 4">
                  {degrees.map((d) => <path key={d} d={`M95 ${413 - d * 5}H679`} />)}
                  <path d="M241 94V421M484 94V421" />
                </g>
                <polyline points={curve} fill="none" stroke="#780a0a" strokeWidth="4" />
                <path d="M323 94V421" stroke="#8c9498" strokeWidth="3" />
                <rect x="100" y="100" width="112" height="36" fill="#000" stroke="#34507a" strokeWidth="3" />
                <rect x="486" y="100" width="185" height="36" fill="#000" stroke="#34507a" strokeWidth="3" />
                <path d="M108 116h18M495 116h18" stroke="#e01818" strokeWidth="4" />
                <g fill="#c4c8cc" fontSize="15">
                  <text x="134" y="122">:</text>
                  <text x="151" y="122">20.0142</text>
                  <text x="519" y="122">jRK.Z [Dinamica1R.tdf]</text>
                  {degrees.map((d) => <text key={d} x="91" y={418 - d * 5} textAnchor="end">{d}</text>)}
                  <text x="241" y="438" textAnchor="middle">6</text>
                  <text x="484" y="438" textAnchor="middle">7</text>
                  <text x="385" y="459" textAnchor="middle">Time [s]</text>
                  <text transform="translate(44 256) rotate(-90)" textAnchor="middle">[deg]</text>
                </g>
              </PlotSvg>
              <PlotCorner aria-label="Detach"><Icon name="corner" size={5} /></PlotCorner>
            </PlotArea>
          </PlotWin>
          <Spacer />
          <Scrollbar parts={[0, 230, 2]} />
        </Desk>
      </Main>
      <Status>Protocol Loaded</Status>
    </Shell>
  );
}
